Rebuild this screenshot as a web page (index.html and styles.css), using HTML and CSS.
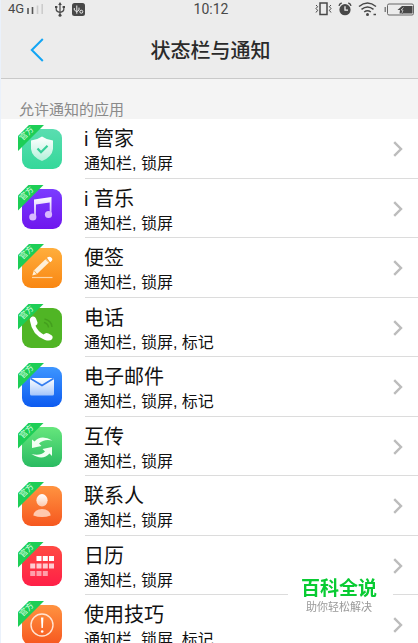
FILE: index.html
```html
<!DOCTYPE html>
<html lang="zh-CN">
<head>
    <meta charset="UTF-8">
    <meta name="viewport" content="width=device-width, initial-scale=1.0">
    <title>状态栏与通知</title>
    <link rel="stylesheet" href="styles.css">
</head>
<body>
    <!-- Shared gradients and the chevron -->
    <svg class="defs" aria-hidden="true">
        <defs>
            <linearGradient id="fade" x1="0" y1="0" x2="0" y2="1">
                <stop offset="0" stop-color="#fff"/>
                <stop offset="1" stop-color="#fff" stop-opacity="0.6"/>
            </linearGradient>
            <symbol id="chevron" viewBox="0 0 10 16">
                <path d="M1.2 1.2 8 8l-6.800 6.800" fill="none" stroke="#bcbcbc" stroke-width="2.400"/>
            </symbol>
        </defs>
    </svg>

    <div class="screen">
        <!-- Status bar -->
        <div class="status-bar">
            <div class="status-left">
                <span class="network">4G</span>
                <svg class="signal" viewBox="0 0 17 10" width="17" height="10">
                    <path d="M1 4v6M5.500 3v7" stroke="#555" stroke-width="1.600"/>
                    <path d="M10.500 1.500V10M15.200 0v10" stroke="#ccc" stroke-width="1.600"/>
                </svg>
                <svg class="usb" viewBox="0 0 10 15" width="10" height="15" fill="none" stroke="#484848" stroke-width="1.200">
                    <path d="M5 2v11M1.200 5v2.500Q1.200 9.500 5 10.500Q8.800 9.500 8.800 7.500V5"/>
                    <path d="M5 0l1.800 3H3.200z" fill="#484848" stroke="none"/>
                    <circle cx="5" cy="13.200" r="1.500" fill="#484848" stroke="none"/>
                    <path d="M0 5h2.400M7.600 5H10" stroke-width="1.800"/>
                </svg>
                <svg class="debug" viewBox="0 0 13 13" width="13" height="13">
                    <rect width="13" height="13" rx="2.500" fill="#484848"/>
                    <path d="M4.800 2.500v8.200M2.300 5v2l2.500 1.800L7 7V4.600" fill="none" stroke="#eee" stroke-width="1"/>
                    <circle cx="9.300" cy="8.700" r="1.500" fill="none" stroke="#eee"/>
                </svg>
            </div>
            <time class="clock">10:12</time>
            <div class="status-right">
                <svg viewBox="0 0 17 14" width="17" height="14" fill="none" stroke="#484848">
                    <rect x="5" y="1" width="7" height="11.500" stroke-width="1.500"/>
                    <path d="M1 3l1.600 1.700L1 6.500l1.600 1.800L1 10.500M16 3l-1.600 1.700L16 6.500l-1.600 1.800L16 10.500"/>
                </svg>
                <svg viewBox="0 0 14 14" width="14" height="14" fill="none">
                    <circle cx="7" cy="7.700" r="5.600" fill="#484848"/>
                    <path d="M7 4.300v3.800h3" stroke="#eee" stroke-width="1.300"/>
                    <path d="M1 3.800Q1.500 1.700 3.700 1M13 3.800Q12.500 1.700 10.300 1" stroke="#484848" stroke-width="1.400"/>
                </svg>
                <svg viewBox="0 0 20 14" width="20" height="14" fill="none" stroke="#484848" stroke-width="1.500">
                    <path d="M1 4.500Q9.500-2.500 18 4.500M3.500 7.300q6-4.800 12 0M6.200 10q3.300-2.600 6.600 0"/>
                    <circle cx="9.500" cy="12.500" r="1.500" fill="#484848" stroke="none"/>
                    <path d="M15.500 12.500h2.500"/>
                </svg>
                <svg viewBox="0 0 30 13" width="30" height="13" fill="none">
                    <path d="M1.200 4v5" stroke="#666" stroke-width="1.200"/>
                    <rect x="3.500" y="1" width="26" height="11" rx="1.500" stroke="#666"/>
                    <path d="M18 3h10.500v7.500H18z" fill="#484848"/>
                    <path d="M18 3l-4.500 4H16l-.5 3.500H19z" fill="#484848"/>
                    <path d="M19.500 4.500l-2.500 2.500h2l-1 3" stroke="#ddd" stroke-width="0.700"/>
                </svg>
            </div>
        </div>

        <!-- Header -->
        <header class="header">
            <button class="back" type="button" aria-label="返回">
                <svg viewBox="0 0 14 24" width="14" height="24">
                    <path d="M12.800 1 1.800 12l11 11" fill="none" stroke="#12a5f4" stroke-width="2"/>
                </svg>
            </button>
            <h1 class="title">状态栏与通知</h1>
        </header>

        <main class="content">
            <h2 class="section-title">允许通知的应用</h2>

            <!-- App list -->
            <ul class="app-list">
                <li><a class="app" href="#manager">
                    <span class="icon icon-manager">
                        <svg viewBox="0 0 40 40">
                            <path d="M20 7.500Q25 11 31 11.500V20Q30 28 20 32Q10 28 9 20V11.500Q15 11 20 7.500z" fill="url(#fade)"/>
                            <path d="M15.500 19.500l3.500 3.700 6.500-6.500" fill="none" stroke="#35cf98" stroke-width="2.200"/>
                        </svg>
                        <span class="badge"><span class="badge-text">官方</span></span>
                    </span>
                    <span class="info"><span class="name">i 管家</span><span class="detail">通知栏, 锁屏</span></span>
                    <svg class="chevron"><use href="#chevron"/></svg>
                </a></li>
                <li><a class="app" href="#music">
                    <span class="icon icon-music">
                        <svg viewBox="0 0 40 40">
                            <path d="M12 10.500 29.500 8V25.500h-1.800V13.500L14 15.500V28h-2z" fill="url(#fade)"/>
                            <circle cx="10.800" cy="28" r="3.600" fill="#d8b8ff"/>
                            <circle cx="26.500" cy="25.500" r="3.600" fill="#d8b8ff"/>
                        </svg>
                        <span class="badge"><span class="badge-text">官方</span></span>
                    </span>
                    <span class="info"><span class="name">i 音乐</span><span class="detail">通知栏, 锁屏</span></span>
                    <svg class="chevron"><use href="#chevron"/></svg>
                </a></li>
                <li><a class="app" href="#notes">
                    <span class="icon icon-notes">
                        <svg viewBox="0 0 40 40">
                            <path d="M10.300 27.500l1.500-5L24 10.800l3.200 3.400-12.500 12z" fill="#fff0d8"/>
                            <path d="M25 9.800q2.500-2 4.500 0t-.8 4.200l-1-.2z" fill="#fff"/>
                            <path d="M12 22.500l2.800 3.500M23.500 11l3.700 3.700" stroke="#f39a2c" stroke-width="0.800"/>
                            <path d="M10 29.500h20.500" stroke="#ffd6a4" stroke-width="1.200"/>
                        </svg>
                        <span class="badge"><span class="badge-text">官方</span></span>
                    </span>
                    <span class="info"><span class="name">便签</span><span class="detail">通知栏, 锁屏</span></span>
                    <svg class="chevron"><use href="#chevron"/></svg>
                </a></li>
                <li><a class="app" href="#phone">
                    <span class="icon icon-phone">
                        <svg viewBox="0 0 40 40">
                            <path d="M8 13q-1-3 2.500-4.500Q13 8 14 10.500l1.500 4q.5 2-2 3.300Q15.500 23 21.500 26.500q2.500-2.500 5-1l3 1.800q2 1.500.5 4Q28 33.500 23 32Q10 27 8 13z" fill="#fff"/>
                            <path d="M22 14.500q4 1 4.500 5M22.500 11q7 1.500 7.500 8" fill="none" stroke="#449f1e" stroke-width="1.400"/>
                        </svg>
                        <span class="badge"><span class="badge-text">官方</span></span>
                    </span>
                    <span class="info"><span class="name">电话</span><span class="detail">通知栏, 锁屏, 标记</span></span>
                    <svg class="chevron"><use href="#chevron"/></svg>
                </a></li>
                <li><a class="app" href="#mail">
                    <span class="icon icon-mail">
                        <svg viewBox="0 0 40 40">
                            <rect x="8" y="11" width="24" height="17.500" rx="1.500" fill="url(#fade)"/>
                            <path d="M8.500 11.500 20 18.500l11.500-7" fill="none" stroke="#347df0" stroke-width="1.700"/>
                        </svg>
                        <span class="badge"><span class="badge-text">官方</span></span>
                    </span>
                    <span class="info"><span class="name">电子邮件</span><span class="detail">通知栏, 锁屏, 标记</span></span>
                    <svg class="chevron"><use href="#chevron"/></svg>
                </a></li>
                <li><a class="app" href="#share">
                    <span class="icon icon-share">
                        <svg viewBox="0 0 40 40" fill="#f3fff4">
                            <path d="M10 12.500l2.500 2Q19 7 30.500 13.500Q22 11.500 17 16.500l2.500 2.500L10 21z"/>
                            <path d="M30 29l-2.500-2.500Q20.500 34 9.500 27Q18 29.500 23 24.500L20.500 22l9.500-2z"/>
                        </svg>
                        <span class="badge"><span class="badge-text">官方</span></span>
                    </span>
                    <span class="info"><span class="name">互传</span><span class="detail">通知栏, 锁屏</span></span>
                    <svg class="chevron"><use href="#chevron"/></svg>
                </a></li>
                <li><a class="app" href="#contacts">
                    <span class="icon icon-contacts">
                        <svg viewBox="0 0 40 40">
                            <ellipse cx="20" cy="14.300" rx="5.600" ry="6.200" fill="url(#fade)"/>
                            <path d="M11.300 29.500Q12.500 23 20 23t8.700 6.500Q20 32.500 11.300 29.500z" fill="#ffc9ae"/>
                        </svg>
                        <span class="badge"><span class="badge-text">官方</span></span>
                    </span>
                    <span class="info"><span class="name">联系人</span><span class="detail">通知栏, 锁屏</span></span>
                    <svg class="chevron"><use href="#chevron"/></svg>
                </a></li>
                <li><a class="app" href="#calendar">
                    <span class="icon icon-calendar">
                        <svg viewBox="0 0 40 40" fill="#fff">
                            <path d="M14.500 10h5v5h-5zM20.800 10h5v5h-5zM27 10h5v5h-5z"/>
                            <path d="M8.200 17.500h5v5h-5zM14.500 17.500h5v5h-5zM20.800 17.500h5v5h-5zM27 17.500h5v5h-5z" opacity="0.750"/>
                            <path d="M8.200 25h5v5h-5zM14.500 25h5v5h-5zM20.800 25h5v5h-5z" opacity="0.550"/>
                        </svg>
                        <span class="badge"><span class="badge-text">官方</span></span>
                    </span>
                    <span class="info"><span class="name">日历</span><span class="detail">通知栏, 锁屏</span></span>
                    <svg class="chevron"><use href="#chevron"/></svg>
                </a></li>
                <li><a class="app" href="#tips">
                    <span class="icon icon-tips">
                        <svg viewBox="0 0 40 40">
                            <circle cx="20" cy="20" r="11" fill="none" stroke="#ffe3d2" stroke-width="1.400"/>
                            <path d="M19 12.500h2.400l-.5 10.500h-1.400z" fill="#fff"/>
                            <circle cx="20.200" cy="26.500" r="1.300" fill="#fff"/>
                        </svg>
                        <span class="badge"><span class="badge-text">官方</span></span>
                    </span>
                    <span class="info"><span class="name">使用技巧</span><span class="detail">通知栏, 锁屏, 标记</span></span>
                    <svg class="chevron"><use href="#chevron"/></svg>
                </a></li>
            </ul>
        </main>
    </div>

    <!-- Watermark over the list -->
    <aside class="watermark">
        <strong class="watermark-name">百科全说</strong>
        <span class="watermark-slogan">助你轻松解决</span>
    </aside>
</body>
</html>
```
FILE: styles.css
```css
/* Reset and base styles */
* {
    margin: 0;
    padding: 0;
    box-sizing: border-box;
}

body {
    font-family: "Liberation Sans", "Noto Sans CJK SC", sans-serif;
    background: #fff;
    color: #111;
}

svg {
    display: block;
    flex: none;
}

.defs {
    position: absolute;
    width: 0;
    height: 0;
}

.screen {
    display: flex;
    flex-direction: column;
    height: 100vh;
    border-left: 1px solid #eaf1fb;
}

/* Status bar */
.status-bar {
    display: grid;
    grid-template-columns: 1fr auto 1fr;
    align-items: center;
    height: 17px;
    padding: 0 4px 0 7px;
    background: #ececec;
    color: #484848;
}

.status-left,
.status-right {
    display: flex;
    align-items: center;
}

.status-right {
    justify-content: flex-end;
    gap: 6px;
}

.network {
    font-family: Roboto, sans-serif;
    font-size: 13px;
    line-height: 18px;
}

.signal {
    margin: 0 11px 0 3px;
}

.debug {
    margin-left: 7px;
}

.clock {
    font-family: Roboto, sans-serif;
    font-size: 14px;
    line-height: 18px;
}

/* Header */
.header {
    display: grid;
    grid-template-columns: 60px 1fr 58px;
    align-items: center;
    height: 62px;
    padding-top: 4px;
    background: #ececec;
    border-bottom: 1px solid #c9c9c9;
}

.back {
    display: flex;
    align-items: center;
    height: 44px;
    padding-left: 29px;
    border: none;
    background: none;
    cursor: pointer;
}

.title {
    padding-top: 2px;
    font-size: 20px;
    font-weight: 500;
    line-height: 28px;
    text-align: center;
    color: #2a2a2a;
}

/* App list */
.content {
    flex: 1;
    min-height: 0;
    overflow-y: auto;
    scrollbar-width: none;
}

.section-title {
    height: 40px;
    padding: 21px 18px 0;
    background: #f4f4f4;
    font-size: 15px;
    font-weight: 400;
    line-height: 20px;
    color: #8a8a8a;
}

.app-list {
    list-style: none;
}

.app {
    display: flex;
    align-items: center;
    height: 60px;
    padding-left: 21px;
    background: linear-gradient(#dcdcdc, #dcdcdc) 84px 100% / 100% 1px no-repeat;
    color: #111;
    text-decoration: none;
}

.app-list li:nth-child(even) .app {
    height: 59px;
}

.info {
    display: flex;
    flex: 1;
    flex-direction: column;
    justify-content: center;
    padding-top: 4px;
    margin-left: 22px;
}

.name {
    font-size: 20px;
    line-height: 26px;
}

.detail {
    font-size: 16px;
    line-height: 24px;
}

.chevron {
    width: 10px;
    height: 16px;
    margin-right: 15px;
}

/* App icons */
.icon {
    position: relative;
    width: 40px;
    height: 40px;
    border-radius: 9px;
}

.icon-manager { background: linear-gradient(#5addb0, #34d89a); }
.icon-music { background: linear-gradient(#7b3cff, #6f16ee); }
.icon-notes { background: linear-gradient(#ffae3c, #f98612); }
.icon-phone { background: #50b525; }
.icon-mail { background: linear-gradient(#3d96ff, #0d5bf0); }
.icon-share { background: linear-gradient(#66e67c, #2abb62); }
.icon-contacts { background: linear-gradient(#ff9340, #f6571f); }
.icon-calendar { background: linear-gradient(#ff4a43, #ff1f47); }
.icon-tips { background: linear-gradient(#ff9340, #f6571f); }

.badge {
    position: absolute;
    top: -4px;
    left: -4px;
    display: flex;
    width: 26px;
    height: 26px;
    background: #1dce56;
    clip-path: polygon(42% 0, 100% 0, 0 100%, 0 42%);
}

.badge-text {
    width: 18px;
    height: 18px;
    font-size: 8px;
    line-height: 18px;
    text-align: center;
    color: #d9ffe2;
    transform: rotate(-45deg);
}

/* Watermark */
.watermark {
    position: fixed;
    right: 25px;
    bottom: 29px;
    display: flex;
    flex-direction: column;
    align-items: center;
    padding: 0 16px 0 13px;
    background: #fff;
}

.watermark-name {
    font-size: 19px;
    font-weight: 700;
    line-height: 22px;
    color: #08cb32;
}

.watermark-slogan {
    font-size: 11px;
    line-height: 14px;
    color: #999;
}
```
